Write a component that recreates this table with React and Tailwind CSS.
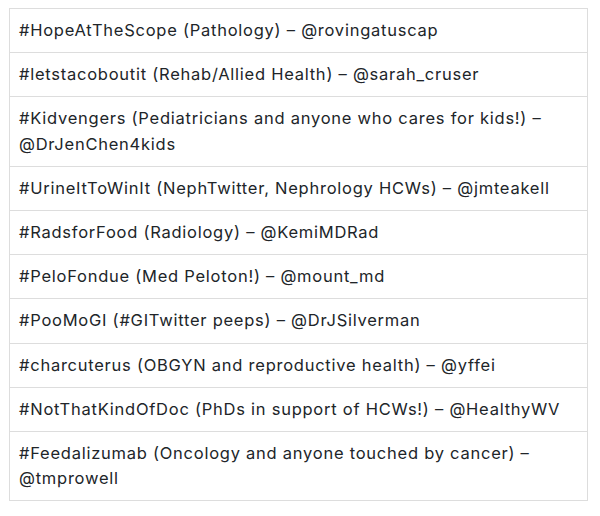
const rows = [
  "#HopeAtTheScope (Pathology) – @rovingatuscap",
  "#letstacoboutit (Rehab/Allied Health) – @sarah_cruser",
  "#Kidvengers (Pediatricians and anyone who cares for kids!) – @DrJenChen4kids",
  "#UrineItToWinIt (NephTwitter, Nephrology HCWs) – @jmteakell",
  "#RadsforFood (Radiology) – @KemiMDRad",
  "#PeloFondue (Med Peloton!) – @mount_md",
  "#PooMoGI (#GITwitter peeps) – @DrJSilverman",
  "#charcuterus (OBGYN and reproductive health) – @yffei",
  "#NotThatKindOfDoc (PhDs in support of HCWs!) – @HealthyWV",
  "#Feedalizumab (Oncology and anyone touched by cancer) – @tmprowell",
];

export default function App() {
  return (
    <div className="bg-white w-[600px] h-[516px] pt-2 pl-[9px] font-['Inter',sans-serif]">
      <table className="w-[579px] border-collapse">
        <tbody>
          {rows.map((r) => (
            <tr key={r}>
              <td className="border border-[#dddddd] px-[9px] py-[9px] text-[16.5px] leading-[25.2px] tracking-[0.75px] text-[#212529]">
                {r}
              </td>
            </tr>
          ))}
        </tbody>
      </table>
    </div>
  );
}
